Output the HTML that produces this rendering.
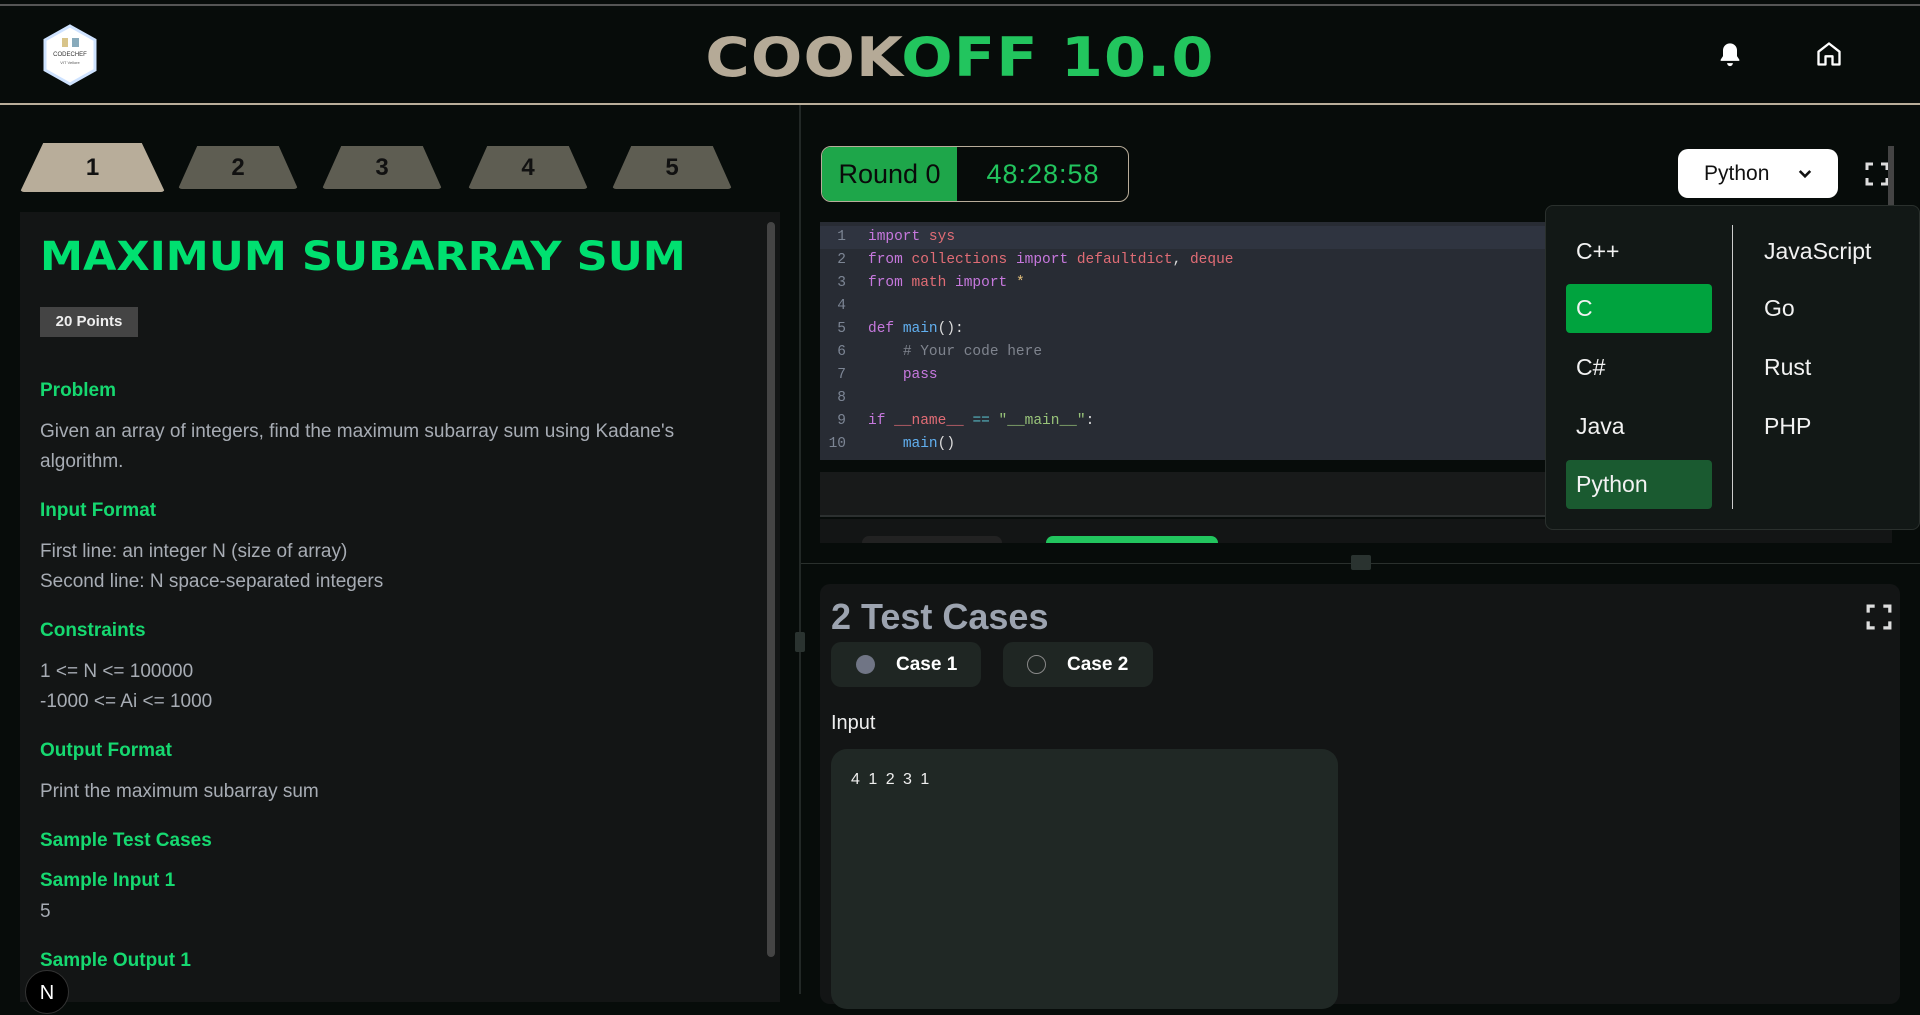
<!DOCTYPE html>
<html><head><meta charset="utf-8"><style>
*{box-sizing:border-box;margin:0;padding:0}
body{width:1920px;height:994px;overflow:hidden;background:#070c0a;font-family:"Liberation Sans",sans-serif;position:relative;color:#ddd}
.abs{position:absolute}
.topline{left:0;top:4px;width:1920px;height:2px;background:#555}
.hdrline{left:0;top:103px;width:1920px;height:2px;background:#b9ae9a}
.vdiv{left:799px;top:105px;width:2px;height:889px;background:#222826}
.title{left:0;width:1920px;top:26px;text-align:center;font-size:54px;font-weight:bold;letter-spacing:1px;transform:scaleX(1.12);font-family:"DejaVu Sans","Liberation Sans",sans-serif}
.tab{top:146px;height:43px;background:#5e5d52;clip-path:polygon(16% 0,84% 0,100% 100%,0 100%);border-radius:4px;color:#111;font-size:24px;font-weight:bold;text-align:center;line-height:43px}
.panel{left:20px;top:212px;width:760px;height:790px;background:#131515}
.h{position:absolute;left:40px;color:#16d870;font-size:19px;font-weight:bold}
.t{position:absolute;left:40px;color:#a7acb4;font-size:19px;line-height:30px}
.code{left:820px;top:222px;width:1072px;height:238px;background:#282c34;font-family:"Liberation Mono",monospace;font-size:14.5px}
.ln{position:absolute;left:0;width:1072px;height:23px;line-height:23px;white-space:pre}
.ln .n{display:inline-block;width:26px;text-align:right;color:#7c8594;margin-right:22px}
.k{color:#c678dd}.r{color:#e06c75}.b{color:#61afef}.y{color:#e5c07b}.c{color:#7f848e}.g{color:#98c379}.cy{color:#56b6c2}
.dd{left:1545px;top:205px;width:375px;height:325px;background:#121816;border:1px solid #2a302d;border-radius:8px}
.it{position:absolute;font-size:23px;color:#f2f2f2;height:49px;line-height:49px;padding-left:10px;border-radius:4px}
</style></head><body>
<div class="abs topline"></div>
<svg class="abs" style="left:42px;top:24px" width="56" height="62" viewBox="0 0 56 62"><polygon points="28,2 53,16 53,46 28,60 3,46 3,16" fill="#fff" stroke="#cfe3ff" stroke-width="3"/><text x="28" y="32" font-size="6" text-anchor="middle" fill="#333" font-family="Liberation Sans">CODECHEF</text><text x="28" y="40" font-size="4" text-anchor="middle" fill="#555" font-family="Liberation Sans">VIT Vellore</text><rect x="20" y="14" width="6" height="9" fill="#d8c48a"/><rect x="30" y="14" width="7" height="9" fill="#8ab"/></svg>
<div class="abs title"><span style="color:#b5aa97">COOK</span><span style="color:#22c55e">OFF 10.0</span></div>
<svg class="abs" style="left:1716px;top:40px" width="28" height="30" viewBox="0 0 24 24" fill="#fff"><path d="M12 2a6 6 0 0 0-6 6v5l-2 3v1h16v-1l-2-3V8a6 6 0 0 0-6-6zm-2.5 17a2.5 2.5 0 0 0 5 0z"/></svg>
<svg class="abs" style="left:1815px;top:40px" width="28" height="28" viewBox="0 0 24 24" fill="none" stroke="#fff" stroke-width="2" stroke-linejoin="round"><path d="M3 10l9-7 9 7v11h-6v-7H9v7H3z"/></svg>
<div class="abs hdrline"></div>
<div class="abs vdiv"></div>
<div class="abs" style="left:795px;top:632px;width:10px;height:20px;background:#2a3330;border-radius:2px"></div>

<div class="abs tab" style="left:20px;top:143px;width:145px;height:49px;line-height:49px;background:#b8ad9a">1</div>
<div class="abs tab" style="left:178px;width:120px">2</div>
<div class="abs tab" style="left:322px;width:120px">3</div>
<div class="abs tab" style="left:468px;width:120px">4</div>
<div class="abs tab" style="left:612px;width:120px">5</div>

<div class="abs panel"></div>
<div class="abs" style="left:767px;top:222px;width:8px;height:735px;background:#444;border-radius:4px"></div>
<div class="abs" style="left:40px;top:234px;font-size:40px;font-weight:bold;color:#00e070;white-space:nowrap;transform:scaleX(1.08);transform-origin:left;font-family:'DejaVu Sans',sans-serif">MAXIMUM SUBARRAY SUM</div>
<div class="abs" style="left:40px;top:307px;width:98px;height:30px;background:#444;color:#eee;font-size:15px;font-weight:bold;text-align:center;line-height:30px">20 Points</div>
<div class="h" style="top:380px">Problem</div>
<div class="t" style="top:417px">Given an array of integers, find the maximum subarray sum using Kadane's<br>algorithm.</div>
<div class="h" style="top:500px">Input Format</div>
<div class="t" style="top:537px">First line: an integer N (size of array)<br>Second line: N space-separated integers</div>
<div class="h" style="top:620px">Constraints</div>
<div class="t" style="top:657px">1 &lt;= N &lt;= 100000<br>-1000 &lt;= Ai &lt;= 1000</div>
<div class="h" style="top:740px">Output Format</div>
<div class="t" style="top:777px">Print the maximum subarray sum</div>
<div class="h" style="top:830px">Sample Test Cases</div>
<div class="h" style="top:870px">Sample Input 1</div>
<div class="t" style="top:897px">5</div>
<div class="h" style="top:950px">Sample Output 1</div>
<div class="abs" style="left:25px;top:970px;width:44px;height:44px;border-radius:50%;background:#000;border:1px solid #333;color:#fff;font-size:20px;text-align:center;line-height:44px">N</div>

<div class="abs" style="left:821px;top:146px;width:308px;height:56px;border:1px solid #b8ad9a;border-radius:10px;overflow:hidden;background:#070c0a">
<div style="position:absolute;left:0;top:0;width:135px;height:56px;background:#1ea64a;color:#0a0a0a;font-size:27px;line-height:54px;text-align:center">Round 0</div>
<div style="position:absolute;left:135px;top:0;width:172px;height:56px;color:#22c55e;font-size:27px;line-height:54px;text-align:center;letter-spacing:1px">48:28:58</div></div>
<div class="abs" style="left:1678px;top:149px;width:160px;height:49px;background:#fff;border-radius:10px;color:#111;font-size:21px;line-height:49px;padding-left:26px">Python<svg style="position:absolute;left:118px;top:16px" width="18" height="18" viewBox="0 0 24 24" fill="none" stroke="#111" stroke-width="3.5"><path d="M5 8l7 7 7-7"/></svg></div>
<svg class="abs" style="left:1865px;top:162px" width="24" height="24" viewBox="0 0 24 24" fill="none" stroke="#ddd" stroke-width="3"><path d="M2 8V2h6M16 2h6v6M22 16v6h-6M8 22H2v-6"/></svg>
<div class="abs" style="left:1888px;top:146px;width:6px;height:60px;background:#444"></div>

<div class="abs code">
<div class="ln" style="top:4px;background:#2f3440"><span class="n">1</span><span class="k">import</span> <span class="r">sys</span></div>
<div class="ln" style="top:27px"><span class="n">2</span><span class="k">from</span> <span class="r">collections</span> <span class="k">import</span> <span class="r">defaultdict</span>, <span class="r">deque</span></div>
<div class="ln" style="top:50px"><span class="n">3</span><span class="k">from</span> <span class="r">math</span> <span class="k">import</span> <span class="y">*</span></div>
<div class="ln" style="top:73px"><span class="n">4</span></div>
<div class="ln" style="top:96px"><span class="n">5</span><span class="k">def</span> <span class="b">main</span>():</div>
<div class="ln" style="top:119px"><span class="n">6</span>    <span class="c"># Your code here</span></div>
<div class="ln" style="top:142px"><span class="n">7</span>    <span class="k">pass</span></div>
<div class="ln" style="top:165px"><span class="n">8</span></div>
<div class="ln" style="top:188px"><span class="n">9</span><span class="k">if</span> <span class="r">__name__</span> <span class="cy">==</span> <span class="g">"__main__"</span>:</div>
<div class="ln" style="top:211px"><span class="n">10</span>    <span class="b">main</span>()</div>
</div>
<div class="abs" style="left:820px;top:472px;width:1072px;height:45px;background:#181a1a;border-bottom:2px solid #2c3030"></div>
<div class="abs" style="left:820px;top:519px;width:1072px;height:24px;background:#131515"></div>
<div class="abs" style="left:862px;top:536px;width:140px;height:7px;background:#222;border-radius:8px 8px 0 0"></div>
<div class="abs" style="left:1046px;top:536px;width:172px;height:7px;background:#22c55e;border-radius:8px 8px 0 0"></div>
<div class="abs" style="left:801px;top:563px;width:1119px;height:1px;background:#2a302d"></div>
<div class="abs" style="left:1351px;top:555px;width:20px;height:15px;background:#2a3330;border-radius:2px"></div>

<div class="abs dd">
<div class="it" style="left:20px;top:21px;width:146px">C++</div>
<div class="it" style="left:20px;top:78px;width:146px;background:#00a33e">C</div>
<div class="it" style="left:20px;top:137px;width:146px">C#</div>
<div class="it" style="left:20px;top:196px;width:146px">Java</div>
<div class="it" style="left:20px;top:254px;width:146px;background:#1a5a30">Python</div>
<div style="position:absolute;left:186px;top:19px;width:1px;height:284px;background:#ccc"></div>
<div class="it" style="left:208px;top:21px">JavaScript</div>
<div class="it" style="left:208px;top:78px">Go</div>
<div class="it" style="left:208px;top:137px">Rust</div>
<div class="it" style="left:208px;top:196px">PHP</div>
</div>

<div class="abs" style="left:820px;top:584px;width:1080px;height:420px;background:#131515;border-radius:10px"></div>
<div class="abs" style="left:831px;top:596px;font-size:36px;font-weight:bold;color:#9ca3af">2 Test Cases</div>
<svg class="abs" style="left:1866px;top:604px" width="26" height="26" viewBox="0 0 24 24" fill="none" stroke="#ddd" stroke-width="3"><path d="M2 8V2h6M16 2h6v6M22 16v6h-6M8 22H2v-6"/></svg>
<div class="abs" style="left:831px;top:642px;width:150px;height:45px;background:#1f2623;border-radius:10px"><div style="position:absolute;left:25px;top:13px;width:19px;height:19px;border-radius:50%;background:#707585"></div><div style="position:absolute;left:65px;top:0;line-height:45px;font-size:19px;font-weight:bold;color:#fff">Case 1</div></div>
<div class="abs" style="left:1003px;top:642px;width:150px;height:45px;background:#1f2623;border-radius:10px"><div style="position:absolute;left:24px;top:13px;width:19px;height:19px;border-radius:50%;border:1.5px solid #888"></div><div style="position:absolute;left:64px;top:0;line-height:45px;font-size:19px;font-weight:bold;color:#fff">Case 2</div></div>
<div class="abs" style="left:831px;top:712px;font-size:20px;color:#eee">Input</div>
<div class="abs" style="left:831px;top:749px;width:507px;height:260px;background:#202825;border-radius:16px"></div>
<div class="abs" style="left:851px;top:771px;font-size:16px;color:#eee;letter-spacing:2px">4 1 2 3 1</div>
</body></html>
